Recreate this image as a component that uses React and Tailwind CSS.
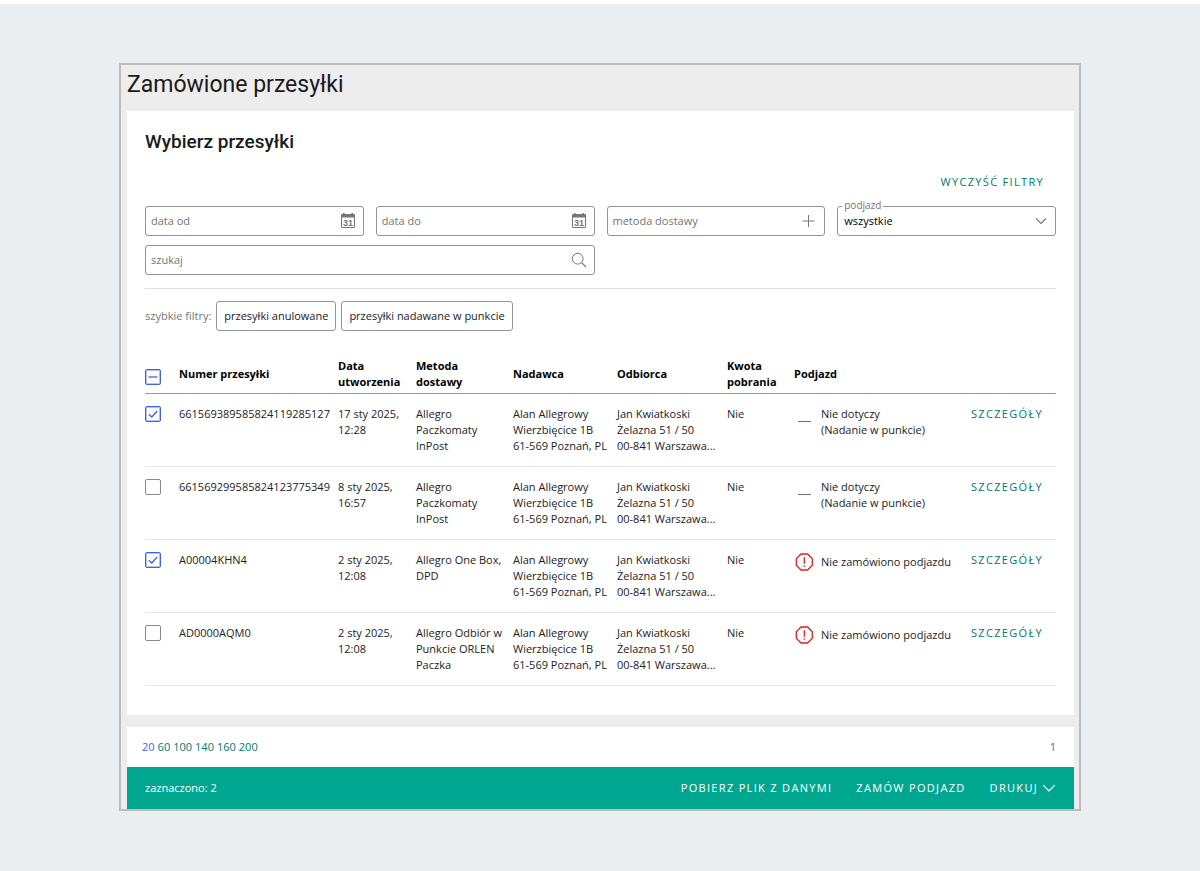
import { useState } from "react";

const ADDRESS = {
  sender: ["Alan Allegrowy", "Wierzbięcice 1B", "61-569 Poznań, PL"],
  recipient: ["Jan Kwiatkoski", "Żelazna 51 / 50", "00-841 Warszawa..."],
};

const SHIPMENTS = [
  {
    number: "661569389585824119285127",
    date: "17 sty 2025, 12:28",
    method: "Allegro Paczkomaty InPost",
    pickup: ["Nie dotyczy", "(Nadanie w punkcie)"],
    alert: false,
  },
  {
    number: "661569299585824123775349",
    date: "8 sty 2025, 16:57",
    method: "Allegro Paczkomaty InPost",
    pickup: ["Nie dotyczy", "(Nadanie w punkcie)"],
    alert: false,
  },
  {
    number: "A00004KHN4",
    date: "2 sty 2025, 12:08",
    method: "Allegro One Box, DPD",
    pickup: ["Nie zamówiono podjazdu"],
    alert: true,
  },
  {
    number: "AD0000AQM0",
    date: "2 sty 2025, 12:08",
    method: "Allegro Odbiór w Punkcie ORLEN Paczka",
    pickup: ["Nie zamówiono podjazdu"],
    alert: true,
  },
];

const CalendarIcon = () => (
  <svg width="16" height="16" viewBox="0 0 16 16" aria-hidden="true">
    <rect x="1.5" y="1.5" width="13" height="13" rx="0.5" fill="none" stroke="#767676" />
    <path d="M1 1.5h14v3H1z M3 0h1.5v2H3z M11.5 0H13v2h-1.5z" fill="#767676" />
    <text
      x="8"
      y="12.6"
      textAnchor="middle"
      fill="#767676"
      className="font-['Liberation_Sans',sans-serif] text-[9px] font-bold"
    >
      31
    </text>
  </svg>
);

const PlusIcon = () => (
  <svg width="16" height="16" viewBox="0 0 16 16" fill="none" stroke="#767676" aria-hidden="true">
    <path d="M7.5 2v12M1.5 8h12" />
  </svg>
);

const SearchIcon = () => (
  <svg width="16" height="16" viewBox="0 0 16 16" fill="none" stroke="#767676" aria-hidden="true">
    <circle cx="6.7" cy="6.7" r="5.4" />
    <path d="M10.6 10.6l4.4 4.4" strokeWidth="1.2" />
  </svg>
);

const ChevronIcon = ({ size, color }) => (
  <svg width={size} height={size} viewBox="0 0 12 12" fill="none" stroke={color} aria-hidden="true">
    <path d="M1 3.5l5 5 5-5" strokeWidth="1.1" />
  </svg>
);

const AlertIcon = () => (
  <svg width="20" height="20" viewBox="0 0 20 20" fill="none" stroke="#e02020" aria-hidden="true">
    <path d="M7 2h6.6l4.7 4.7v6.6L13.6 18H7l-4.7-4.7V6.7z" strokeWidth="1.3" />
    <path d="M10.3 5.2v6.6M10.3 13.2v1.5" strokeWidth="1.3" />
  </svg>
);

const DashIcon = () => (
  <svg width="20" height="20" viewBox="0 0 20 20" fill="none" stroke="#767676" aria-hidden="true">
    <path d="M4 9.5h13" strokeWidth="1.1" />
  </svg>
);

const Checkbox = ({ label, checked, partial, onChange }) => {
  const active = checked || partial;

  return (
    <label className="grid size-4 cursor-pointer">
      <input
        type="checkbox"
        aria-label={label}
        checked={checked}
        onChange={onChange}
        className={`col-start-1 row-start-1 size-4 appearance-none rounded-[2px] border ${
          active ? "border-[#4064e0] ring-1 ring-inset ring-[#4064e0]/40" : "border-[#8a8a8a]"
        }`}
      />
      {active && (
        <svg
          viewBox="0 0 16 16"
          fill="none"
          stroke="#4064e0"
          strokeWidth="1.3"
          className="pointer-events-none col-start-1 row-start-1 size-4"
          aria-hidden="true"
        >
          <path d={partial ? "M3.5 8h9" : "M3.8 8.2l3 2.8 5.4-6"} />
        </svg>
      )}
    </label>
  );
};

const Field = ({ label, type = "text", className = "", children }) => (
  <div
    className={`flex h-[30px] items-center rounded-[3px] border border-[#949494] pr-[7px] pl-[5px] ${className}`}
  >
    <input
      type={type}
      aria-label={label}
      placeholder={label}
      className="min-w-0 flex-1 text-[11px] leading-4 outline-none placeholder:text-[#757575]"
    />
    {children}
  </div>
);

const Filters = () => (
  <div className="grid grid-cols-4 gap-x-3 gap-y-[9px]">
    <Field label="data od">
      <CalendarIcon />
    </Field>
    <Field label="data do">
      <CalendarIcon />
    </Field>
    <Field label="metoda dostawy">
      <PlusIcon />
    </Field>
    <div className="relative flex h-[30px] items-center rounded-[3px] border border-[#949494] pr-2 pl-[6px]">
      <label
        htmlFor="pickup"
        className="absolute -top-2.5 left-1 bg-white px-0.5 text-[10px] leading-4 text-[#757575]"
      >
        podjazd
      </label>
      <select id="pickup" className="min-w-0 flex-1 appearance-none text-[11px] leading-4 text-black outline-none">
        <option>wszystkie</option>
      </select>
      <ChevronIcon size={12} color="#767676" />
    </div>
    <Field label="szukaj" type="search" className="col-span-2">
      <SearchIcon />
    </Field>
  </div>
);

const ShipmentsTable = ({ selected, setSelected }) => {
  const all = selected.length === SHIPMENTS.length;

  const toggle = (number) =>
    setSelected(
      selected.includes(number) ? selected.filter((n) => n !== number) : [...selected, number]
    );

  return (
    <table className="w-full table-fixed text-left text-[11px] leading-4">
      <colgroup>
        <col className="w-[34px]" />
        <col className="w-[159px]" />
        <col className="w-[78px]" />
        <col className="w-[97px]" />
        <col className="w-[104px]" />
        <col className="w-[110px]" />
        <col className="w-[67px]" />
        <col />
        <col className="w-[85px]" />
      </colgroup>
      <thead>
        <tr className="border-b border-[#999] text-black [&>th]:pb-[3px]">
          <th className="pt-1.5">
            <Checkbox
              label="zaznacz wszystkie"
              checked={all}
              partial={!all && selected.length > 0}
              onChange={() => setSelected(all ? [] : SHIPMENTS.map((s) => s.number))}
            />
          </th>
          <th>Numer przesyłki</th>
          <th>
            Data
            <br />
            utworzenia
          </th>
          <th>
            Metoda
            <br />
            dostawy
          </th>
          <th>Nadawca</th>
          <th>Odbiorca</th>
          <th>
            Kwota
            <br />
            pobrania
          </th>
          <th>Podjazd</th>
          <th></th>
        </tr>
      </thead>
      <tbody>
        {SHIPMENTS.map((s) => (
          <tr key={s.number} className="border-b border-[#e6e6e6] align-top [&>td]:pt-3 [&>td]:pb-3">
            <td>
              <Checkbox
                label={s.number}
                checked={selected.includes(s.number)}
                onChange={() => toggle(s.number)}
              />
            </td>
            <td>{s.number}</td>
            <td className="pr-3">{s.date}</td>
            <td className="pr-2">{s.method}</td>
            {[ADDRESS.sender, ADDRESS.recipient].map((lines) => (
              <td key={lines[0]} className="whitespace-nowrap">
                {lines.map((line) => (
                  <div key={line}>{line}</div>
                ))}
              </td>
            ))}
            <td>Nie</td>
            <td>
              <div className="flex items-center gap-[7px]">
                {s.alert ? <AlertIcon /> : <DashIcon />}
                <div>
                  {s.pickup.map((line) => (
                    <div key={line}>{line}</div>
                  ))}
                </div>
              </div>
            </td>
            <td>
              <a href="#" className="tracking-[0.12em] text-[#00796b]">
                SZCZEGÓŁY
              </a>
            </td>
          </tr>
        ))}
      </tbody>
    </table>
  );
};

const App = () => {
  const [selected, setSelected] = useState([SHIPMENTS[0].number, SHIPMENTS[2].number]);

  return (
    <div className="min-h-screen border-t-4 border-white bg-[#eaeef1] pt-[59px] font-['Open_Sans','Noto_Sans',sans-serif] text-[#222]">
      <main className="mx-auto max-w-[962px] border-2 border-[#bdbdbd] bg-[#ededed] pr-[5px] pl-[6px]">
        <h1 className="pt-1 pb-2.5 font-[Roboto,sans-serif] text-[23px] leading-8 text-[#1a1a1a]">
          Zamówione przesyłki
        </h1>

        <section className="bg-white px-[18px] pt-[17px] pb-[29px]">
          <h2 className="font-[Roboto,sans-serif] text-[19px] leading-7 font-medium text-[#1a1a1a]">
            Wybierz przesyłki
          </h2>

          <div className="flex justify-end pt-[18px] pr-3 pb-4">
            <button className="cursor-pointer text-[11px] leading-4 font-medium tracking-[0.12em] text-[#00796b]">
              WYCZYŚĆ FILTRY
            </button>
          </div>

          <Filters />

          <div className="mt-[13px] flex items-center gap-[5px] border-t border-[#e0e0e0] pt-3 text-[11px] leading-4">
            <span className="text-[#757575]">szybkie filtry:</span>
            <button className="h-[30px] cursor-pointer rounded-[3px] border border-[#949494] px-[7px]">
              przesyłki anulowane
            </button>
            <button className="h-[30px] cursor-pointer rounded-[3px] border border-[#949494] px-[7px]">
              przesyłki nadawane w punkcie
            </button>
          </div>

          <div className="pt-[27px]">
            <ShipmentsTable selected={selected} setSelected={setSelected} />
          </div>
        </section>

        <nav className="mt-3 flex justify-between bg-white py-3 pr-[18px] pl-[15px] text-[11px] leading-4">
          <div className="flex gap-[3px] text-[#00796b]">
            <a href="#" className="text-[#4064e0]">
              20
            </a>
            <a href="#">60</a>
            <a href="#">100</a>
            <a href="#">140</a>
            <a href="#">160</a>
            <a href="#">200</a>
          </div>
          <a href="#" className="text-[#4064e0]">
            1
          </a>
        </nav>

        <footer className="flex items-center justify-between bg-[#00a790] px-[18px] py-[13px] text-[11px] leading-4 text-white">
          <span>zaznaczono: {selected.length}</span>
          <div className="flex gap-6 font-medium tracking-[0.12em]">
            <button className="cursor-pointer">POBIERZ PLIK Z DANYMI</button>
            <button className="cursor-pointer">ZAMÓW PODJAZD</button>
            <button className="flex cursor-pointer items-center gap-1">
              DRUKUJ
              <ChevronIcon size={14} color="#ffffff" />
            </button>
          </div>
        </footer>
      </main>
    </div>
  );
};

export default App;
